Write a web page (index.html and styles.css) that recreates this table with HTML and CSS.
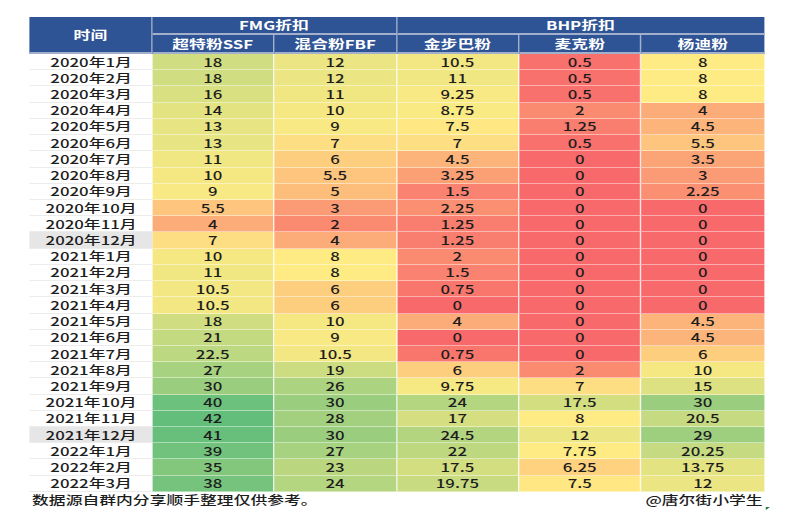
FILE: index.html
```html
<!DOCTYPE html>
<html lang="zh-CN">
<head>
<meta charset="utf-8">
<title>FMG / BHP 折扣</title>
<link rel="stylesheet" href="styles.css">
</head>
<body>
<div class="page">
  <div class="sheet">
    <div class="hd time-h">时间</div>
    <div class="hd g-fmg">FMG折扣</div>
    <div class="hd g-bhp">BHP折扣</div>
    <div class="hd sub">超特粉SSF</div>
    <div class="hd sub">混合粉FBF</div>
    <div class="hd sub">金步巴粉</div>
    <div class="hd sub">麦克粉</div>
    <div class="hd sub">杨迪粉</div>

    <div class="t">2020年1月</div><div class="c" data-v="18">18</div><div class="c" data-v="12">12</div><div class="c" data-v="10.5">10.5</div><div class="c" data-v="0.5">0.5</div><div class="c" data-v="8">8</div>
    <div class="t">2020年2月</div><div class="c" data-v="18">18</div><div class="c" data-v="12">12</div><div class="c" data-v="11">11</div><div class="c" data-v="0.5">0.5</div><div class="c" data-v="8">8</div>
    <div class="t">2020年3月</div><div class="c" data-v="16">16</div><div class="c" data-v="11">11</div><div class="c" data-v="9.25">9.25</div><div class="c" data-v="0.5">0.5</div><div class="c" data-v="8">8</div>
    <div class="t">2020年4月</div><div class="c" data-v="14">14</div><div class="c" data-v="10">10</div><div class="c" data-v="8.75">8.75</div><div class="c" data-v="2">2</div><div class="c" data-v="4">4</div>
    <div class="t">2020年5月</div><div class="c" data-v="13">13</div><div class="c" data-v="9">9</div><div class="c" data-v="7.5">7.5</div><div class="c" data-v="1.25">1.25</div><div class="c" data-v="4.5">4.5</div>
    <div class="t">2020年6月</div><div class="c" data-v="13">13</div><div class="c" data-v="7">7</div><div class="c" data-v="7">7</div><div class="c" data-v="0.5">0.5</div><div class="c" data-v="5.5">5.5</div>
    <div class="t">2020年7月</div><div class="c" data-v="11">11</div><div class="c" data-v="6">6</div><div class="c" data-v="4.5">4.5</div><div class="c" data-v="0">0</div><div class="c" data-v="3.5">3.5</div>
    <div class="t">2020年8月</div><div class="c" data-v="10">10</div><div class="c" data-v="5.5">5.5</div><div class="c" data-v="3.25">3.25</div><div class="c" data-v="0">0</div><div class="c" data-v="3">3</div>
    <div class="t">2020年9月</div><div class="c" data-v="9">9</div><div class="c" data-v="5">5</div><div class="c" data-v="1.5">1.5</div><div class="c" data-v="0">0</div><div class="c" data-v="2.25">2.25</div>
    <div class="t">2020年10月</div><div class="c" data-v="5.5">5.5</div><div class="c" data-v="3">3</div><div class="c" data-v="2.25">2.25</div><div class="c" data-v="0">0</div><div class="c" data-v="0">0</div>
    <div class="t">2020年11月</div><div class="c" data-v="4">4</div><div class="c" data-v="2">2</div><div class="c" data-v="1.25">1.25</div><div class="c" data-v="0">0</div><div class="c" data-v="0">0</div>
    <div class="t sel">2020年12月</div><div class="c" data-v="7">7</div><div class="c" data-v="4">4</div><div class="c" data-v="1.25">1.25</div><div class="c" data-v="0">0</div><div class="c" data-v="0">0</div>
    <div class="t">2021年1月</div><div class="c" data-v="10">10</div><div class="c" data-v="8">8</div><div class="c" data-v="2">2</div><div class="c" data-v="0">0</div><div class="c" data-v="0">0</div>
    <div class="t">2021年2月</div><div class="c" data-v="11">11</div><div class="c" data-v="8">8</div><div class="c" data-v="1.5">1.5</div><div class="c" data-v="0">0</div><div class="c" data-v="0">0</div>
    <div class="t">2021年3月</div><div class="c" data-v="10.5">10.5</div><div class="c" data-v="6">6</div><div class="c" data-v="0.75">0.75</div><div class="c" data-v="0">0</div><div class="c" data-v="0">0</div>
    <div class="t">2021年4月</div><div class="c" data-v="10.5">10.5</div><div class="c" data-v="6">6</div><div class="c" data-v="0">0</div><div class="c" data-v="0">0</div><div class="c" data-v="0">0</div>
    <div class="t">2021年5月</div><div class="c" data-v="18">18</div><div class="c" data-v="10">10</div><div class="c" data-v="4">4</div><div class="c" data-v="0">0</div><div class="c" data-v="4.5">4.5</div>
    <div class="t">2021年6月</div><div class="c" data-v="21">21</div><div class="c" data-v="9">9</div><div class="c" data-v="0">0</div><div class="c" data-v="0">0</div><div class="c" data-v="4.5">4.5</div>
    <div class="t">2021年7月</div><div class="c" data-v="22.5">22.5</div><div class="c" data-v="10.5">10.5</div><div class="c" data-v="0.75">0.75</div><div class="c" data-v="0">0</div><div class="c" data-v="6">6</div>
    <div class="t">2021年8月</div><div class="c" data-v="27">27</div><div class="c" data-v="19">19</div><div class="c" data-v="6">6</div><div class="c" data-v="2">2</div><div class="c" data-v="10">10</div>
    <div class="t">2021年9月</div><div class="c" data-v="30">30</div><div class="c" data-v="26">26</div><div class="c" data-v="9.75">9.75</div><div class="c" data-v="7">7</div><div class="c" data-v="15">15</div>
    <div class="t">2021年10月</div><div class="c" data-v="40">40</div><div class="c" data-v="30">30</div><div class="c" data-v="24">24</div><div class="c" data-v="17.5">17.5</div><div class="c" data-v="30">30</div>
    <div class="t">2021年11月</div><div class="c" data-v="42">42</div><div class="c" data-v="28">28</div><div class="c" data-v="17">17</div><div class="c" data-v="8">8</div><div class="c" data-v="20.5">20.5</div>
    <div class="t sel">2021年12月</div><div class="c" data-v="41">41</div><div class="c" data-v="30">30</div><div class="c" data-v="24.5">24.5</div><div class="c" data-v="12">12</div><div class="c" data-v="29">29</div>
    <div class="t">2022年1月</div><div class="c" data-v="39">39</div><div class="c" data-v="27">27</div><div class="c" data-v="22">22</div><div class="c" data-v="7.75">7.75</div><div class="c" data-v="20.25">20.25</div>
    <div class="t">2022年2月</div><div class="c" data-v="35">35</div><div class="c" data-v="23">23</div><div class="c" data-v="17.5">17.5</div><div class="c" data-v="6.25">6.25</div><div class="c" data-v="13.75">13.75</div>
    <div class="t">2022年3月</div><div class="c" data-v="38">38</div><div class="c" data-v="24">24</div><div class="c" data-v="19.75">19.75</div><div class="c" data-v="7.5">7.5</div><div class="c" data-v="12">12</div>
  </div>
  <div class="foot">
    <span class="note">数据源自群内分享顺手整理仅供参考。</span>
    <span class="sign">@唐尔街小学生</span>
  </div>
  <span class="handle"></span>
</div>
<script src="script.js"></script>
</body>
</html>
```

FILE: styles.css
```css
html, body {
  margin: 0;
  background: #ffffff;
}
body {
  font-family: "Noto Sans CJK SC", "Microsoft YaHei", sans-serif;
  color: #1d1d1d;
}
.page {
  position: relative;
  width: 566px;
  height: 522px;
  box-sizing: border-box;
  padding: 17px 0 0 21.4px;
  transform: scaleX(1.4);
  transform-origin: 0 0;
}
.sheet {
  display: grid;
  width: 524.3px;
  grid-template-columns: repeat(6, 1fr);
  grid-template-rows: 18px 19px repeat(27, 16.22px);
  font-size: 12px;
  line-height: 1;
}
.hd {
  background: #2f5496;
  color: #ffffff;
  font-weight: 700;
  display: flex;
  align-items: center;
  justify-content: center;
  border-right: 1px solid #a3b0cc;
  border-bottom: 2px solid #a3b0cc;
}
.time-h { grid-row: 1 / 3; }
.g-fmg { grid-column: 2 / 4; }
.g-bhp { grid-column: 4 / 7; border-right: none; }
.t, .c {
  display: flex;
  align-items: center;
  justify-content: center;
  font-weight: 500;
}
.t {
  background: #ffffff;
  border-bottom: 1px solid #ececec;
}
.t.sel { background: #e6e6e6; }
.c {
  border-right: 1px solid rgba(255, 255, 255, 0.85);
  border-bottom: 1px solid rgba(255, 255, 255, 0.45);
}
.sheet > :nth-child(6n+8) { border-right: none; }
.foot {
  display: flex;
  justify-content: space-between;
  width: 524.3px;
  box-sizing: border-box;
  padding: 1px 1px 0 1.5px;
  font-size: 12px;
  line-height: 14px;
  font-weight: 500;
  color: #1d1d1d;
}
.handle {
  position: absolute;
  left: 546.5px;
  top: 507px;
  width: 0;
  height: 0;
  border-top: 3px solid #1e7b34;
  border-right: 3px solid transparent;
}
```

FILE: script.js
```js
(function () {
  var cells = Array.prototype.slice.call(document.querySelectorAll('.c'));
  var vals = cells.map(function (c) { return parseFloat(c.getAttribute('data-v')); });
  var s = vals.slice().sort(function (a, b) { return a - b; });
  var min = s[0], max = s[s.length - 1];
  var pos = (s.length - 1) * 0.5, lo = Math.floor(pos), hi = Math.ceil(pos);
  var mid = s[lo] + (s[hi] - s[lo]) * (pos - lo);
  var red = [248, 105, 107], yel = [255, 235, 132], grn = [99, 190, 123];
  function mix(a, b, t) {
    return 'rgb(' + a.map(function (x, i) { return Math.round(x + (b[i] - x) * t); }).join(',') + ')';
  }
  cells.forEach(function (c, i) {
    var v = vals[i];
    c.style.background = v <= mid ? mix(red, yel, (v - min) / (mid - min)) : mix(yel, grn, (v - mid) / (max - mid));
  });
})();
```
